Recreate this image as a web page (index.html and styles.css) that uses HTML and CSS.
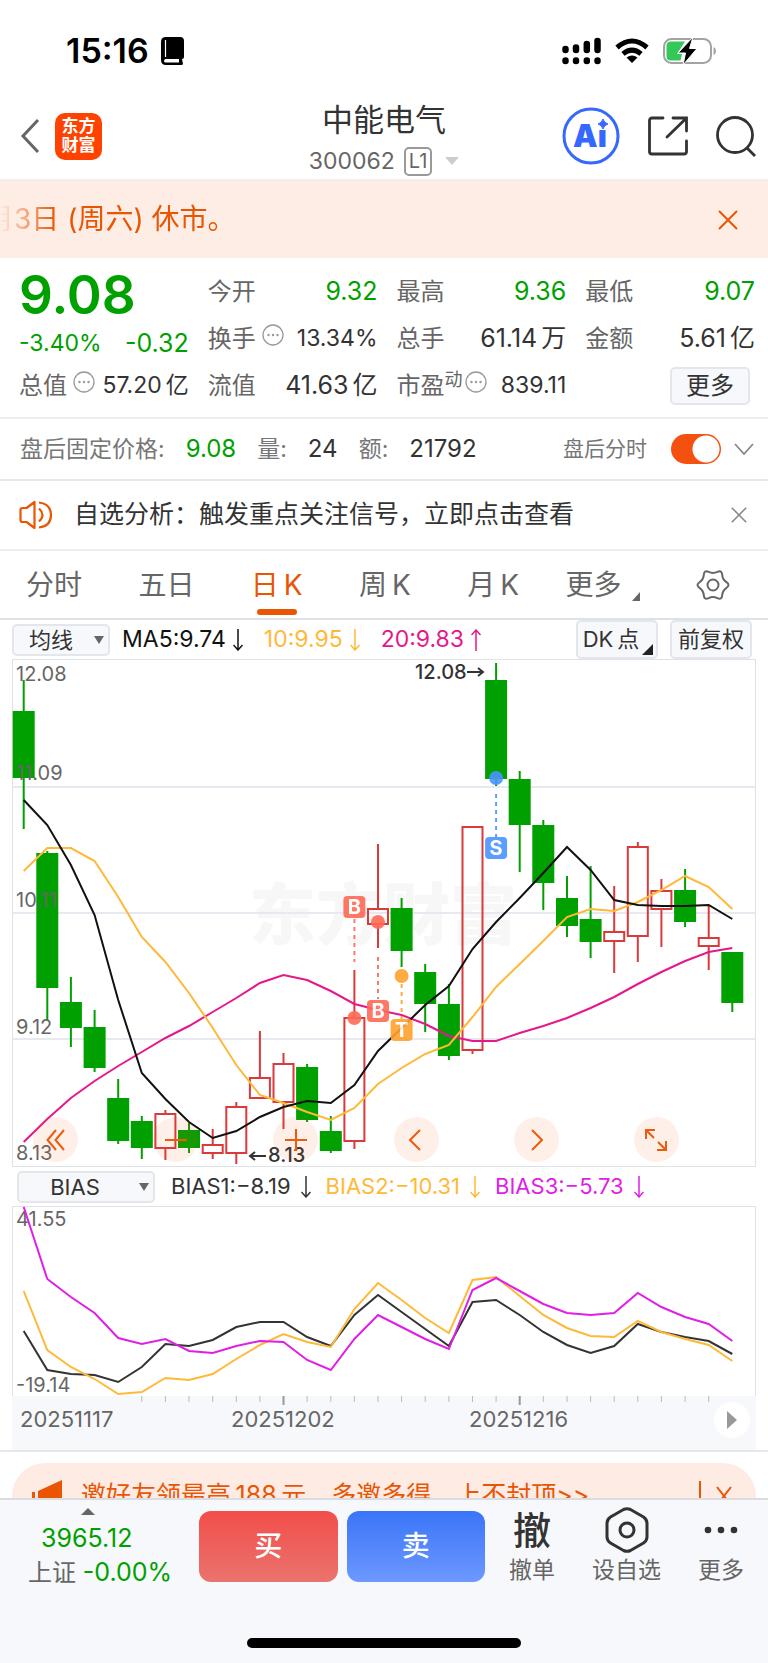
FILE: index.html
```html
<!DOCTYPE html>
<html lang="zh-CN">
<head>
  <meta charset="UTF-8">
  <meta name="viewport" content="width=device-width, initial-scale=1.0">
  <title>中能电气 300062</title>
  <link rel="stylesheet" href="styles.css">
</head>
<body>
  <svg class="defs" width="0" height="0">
    <symbol id="down" viewBox="0 0 10 22"><path d="M5 0V21M0.5 16L5 21L9.5 16" fill="none" stroke="currentColor" stroke-width="1.5"/></symbol>
    <symbol id="up" viewBox="0 0 10 22"><path d="M5 22V1M0.5 6L5 1L9.5 6" fill="none" stroke="currentColor" stroke-width="1.5"/></symbol>
    <symbol id="close" viewBox="0 0 20 20"><path d="M1 1L19 19M19 1L1 19" fill="none" stroke="currentColor" stroke-width="2"/></symbol>
    <symbol id="more" viewBox="0 0 22 22"><circle cx="11" cy="11" r="10" fill="none" stroke="#999" stroke-width="1.3"/><circle cx="6.500" cy="11" r="1.200" fill="#999"/><circle cx="11" cy="11" r="1.200" fill="#999"/><circle cx="15.500" cy="11" r="1.200" fill="#999"/></symbol>
  </svg>

  <main>
    <div class="statusBar">
      <div class="time">
        <span>15:16</span>
        <svg width="24" height="28" viewBox="0 0 24 28">
          <path d="M5 0H19Q23 0 23 4V20Q23 22 21 22L22 27Q22 28 20 28H5Q0 28 0 23V5Q0 0 5 0Z" fill="#000"/>
          <path d="M4.500 3V20" stroke="#fff" stroke-width="1.200"/>
          <path d="M3 24Q3 22 5 22H18V25.500H5Q3 25.500 3 24Z" fill="#fff"/>
        </svg>
      </div>
      <div class="signals">
        <svg width="39" height="28" viewBox="0 0 39 28" fill="none" stroke="#000" stroke-width="6.500" stroke-linecap="round">
          <path d="M3.500 12V13M14 10.500V13M24.800 7V13M35.500 4V13M3.500 23.500V24M14 23.500V24M24.800 23.500V24M35.500 23.500V24"/>
        </svg>
        <svg width="34" height="26" viewBox="0 0 34 26" fill="none" stroke="#000" stroke-width="5">
          <path d="M2 9.500Q17 -3.500 32 9.500"/>
          <path d="M8 15.800Q17 8.300 26 15.800"/>
          <path d="M11.500 19.500Q17 15.500 22.500 19.500L17 25Z" fill="#000" stroke="none"/>
        </svg>
        <svg width="54" height="28" viewBox="0 0 54 28">
          <rect x="1" y="2" width="47" height="24" rx="7.500" fill="#fff" stroke="#a3a3a3" stroke-width="2"/>
          <path d="M50.500 10Q53 11 53 14T50.500 18Z" fill="#a3a3a3"/>
          <path d="M8 4.500H22L14 17H19L17.500 23.500H8Q3.500 23.500 3.500 19V9Q3.500 4.500 8 4.500Z" fill="#34c759"/>
          <path d="M30 0L15 16H22.500L20 28L34 11.500H26.500Z" fill="#000" stroke="#fff" stroke-width="1"/>
        </svg>
      </div>
    </div>

    <header class="header">
      <div class="headLeft">
        <button type="button" class="iconBtn" aria-label="返回">
          <svg width="20" height="36" viewBox="0 0 20 36"><path d="M18 2L3 18L18 34" fill="none" stroke="#666" stroke-width="3"/></svg>
        </button>
        <a href="#" class="logo">东方<br>财富</a>
      </div>
      <div class="headTitle">
        <h1>中能电气</h1>
        <p>300062 <span class="level">L1</span><i class="caret"></i></p>
      </div>
      <div class="headRight">
        <button type="button" class="iconBtn" aria-label="Ai">
          <svg width="58" height="58" viewBox="0 0 58 58">
            <circle cx="29" cy="29" r="27" fill="#fff" stroke="#3568ff" stroke-width="3"/>
            <text x="11" y="40" class="aiText">Aı</text>
            <path d="M41 12Q42 16 46 17Q42 18 41 22Q40 18 36 17Q40 16 41 12Z" fill="#3568ff" stroke="#3568ff"/>
          </svg>
        </button>
        <button type="button" class="iconBtn" aria-label="分享">
          <svg width="40" height="40" viewBox="0 0 40 40" fill="none" stroke="#333" stroke-width="2.800" stroke-linecap="round">
            <path d="M15 2H4Q1.500 2 1.500 4.500V35.500Q1.500 38 4 38H36Q38.500 38 38.500 35.500V25M25 2H38.500V15M38 2.500L19 21"/>
          </svg>
        </button>
        <button type="button" class="iconBtn" aria-label="搜索">
          <svg width="40" height="42" viewBox="0 0 40 42" fill="none" stroke="#333" stroke-width="2.800">
            <circle cx="19" cy="20" r="17.500"/><path d="M31 33L39 41"/>
          </svg>
        </button>
      </div>
    </header>

    <div class="banner">
      <p>月3日 (周六) 休市。</p>
      <button type="button" class="iconBtn" aria-label="关闭公告"><svg width="20" height="20"><use href="#close"/></svg></button>
    </div>

    <section class="quote">
      <div class="price green">9.08</div>
      <div class="cell"><span>今开</span><b class="green">9.32</b></div>
      <div class="cell"><span>最高</span><b class="green">9.36</b></div>
      <div class="cell"><span>最低</span><b class="green">9.07</b></div>
      <div class="cell change green"><b class="small">-3.40%</b><b>-0.32</b></div>
      <div class="cell"><span>换手<svg width="22" height="22"><use href="#more"/></svg></span><b class="small">13.34%</b></div>
      <div class="cell"><span>总手</span><b>61.14<em>万</em></b></div>
      <div class="cell"><span>金额</span><b>5.61<em>亿</em></b></div>
      <div class="cell"><span>总值<svg width="22" height="22"><use href="#more"/></svg></span><b class="small">57.20<em>亿</em></b></div>
      <div class="cell"><span>流值</span><b>41.63<em>亿</em></b></div>
      <div class="cell"><span>市盈<sup>动</sup><svg width="22" height="22"><use href="#more"/></svg></span><b class="small">839.11</b></div>
      <div class="cell last"><button type="button" class="moreBtn">更多</button></div>
    </section>

    <section class="afterHours">
      <p><span>盘后固定价格:</span><b class="green">9.08</b><span>量:</span><b>24</b><span>额:</span><b>21792</b></p>
      <label class="toggle">盘后分时<input type="checkbox" checked></label>
      <button type="button" class="iconBtn" aria-label="展开"><svg width="20" height="12" viewBox="0 0 20 12"><path d="M1 1L10 11L19 1" fill="none" stroke="#888" stroke-width="1.800"/></svg></button>
    </section>

    <section class="notice">
      <svg width="34" height="30" viewBox="0 0 34 30" fill="none" stroke="#ea5504" stroke-width="2.200">
        <path d="M15.500 2V28L7.500 22H3.500Q1.500 22 1.500 20V10Q1.500 8 3.500 8H7.500Z" stroke-linejoin="round"/>
        <path d="M20 8.500Q27 15 20 21.500M20 2.500Q32 4 32 15T20 27.500"/>
      </svg>
      <a href="#">自选分析：触发重点关注信号，立即点击查看</a>
      <button type="button" class="iconBtn gray" aria-label="关闭提示"><svg width="16" height="16"><use href="#close"/></svg></button>
    </section>

    <nav class="tabs">
      <a href="#">分时</a>
      <a href="#">五日</a>
      <a href="#" class="active">日&thinsp;K</a>
      <a href="#">周&thinsp;K</a>
      <a href="#">月&thinsp;K</a>
      <a href="#" class="corner">更多</a>
      <button type="button" class="iconBtn" aria-label="设置">
        <svg width="34" height="32" viewBox="0 0 34 32" fill="none" stroke="#666" stroke-width="2">
          <path d="M30.500 18.800Q26.500 21.500 26.200 26.400Q25.800 31.200 21.400 29.100Q17 27 12.600 29.100Q8.200 31.200 7.800 26.400Q7.500 21.500 3.500 18.800Q-0.500 16 3.500 13.200Q7.500 10.500 7.800 5.600Q8.200 0.800 12.600 2.900Q17 5 21.400 2.900Q25.800 0.800 26.200 5.600Q26.500 10.500 30.500 13.200Q34.500 16 30.500 18.800Z"/>
          <circle cx="17" cy="16" r="5.500"/>
        </svg>
      </button>
    </nav>

    <section class="chartBox">
      <div class="legend maLegend">
        <label class="pick"><select aria-label="主图指标"><option>均线</option></select></label>
        <span class="ma5">MA5:9.74<svg width="10" height="22"><use href="#down"/></svg></span>
        <span class="ma10">10:9.95<svg width="10" height="22"><use href="#down"/></svg></span>
        <span class="ma20">20:9.83<svg width="10" height="22"><use href="#up"/></svg></span>
        <button type="button" class="toolBtn dk">DK&thinsp;点</button>
        <button type="button" class="toolBtn">前复权</button>
      </div>

      <div class="kWrap">
        <svg id="kChart" class="chart" viewBox="0 0 744 508"></svg>
        <div class="chartTools">
          <button type="button" aria-label="最左"><svg width="20" height="22" viewBox="0 0 20 22"><path d="M10 1L1.500 11L10 21M18 1L9.500 11L18 21"/></svg></button>
          <button type="button" aria-label="缩小"><svg width="22" height="22" viewBox="0 0 22 22"><path d="M0 11H22"/></svg></button>
          <button type="button" aria-label="放大"><svg width="22" height="22" viewBox="0 0 22 22"><path d="M0 11H22M11 0V22"/></svg></button>
          <button type="button" aria-label="左移"><svg width="22" height="22" viewBox="0 0 22 22"><path d="M15 1L5 11L15 21"/></svg></button>
          <button type="button" aria-label="右移"><svg width="22" height="22" viewBox="0 0 22 22"><path d="M7 1L17 11L7 21"/></svg></button>
          <button type="button" aria-label="全屏"><svg width="22" height="22" viewBox="0 0 22 22"><path d="M1 10V1H10M1 1L9 9M21 12V21H12M21 21L13 13"/></svg></button>
        </div>
      </div>

      <div class="legend biasLegend">
        <label class="pick wide"><select aria-label="副图指标"><option>BIAS</option></select></label>
        <span class="b1">BIAS1:−8.19<svg width="10" height="22"><use href="#down"/></svg></span>
        <span class="b2">BIAS2:−10.31<svg width="10" height="22"><use href="#down"/></svg></span>
        <span class="b3">BIAS3:−5.73<svg width="10" height="22"><use href="#down"/></svg></span>
      </div>

      <svg id="biasChart" class="chart" viewBox="0 0 744 190"></svg>
      <div class="axis">
        <svg id="axisChart" class="chart" viewBox="0 0 744 54"></svg>
        <button type="button" class="play" aria-label="播放"><svg width="12" height="18" viewBox="0 0 12 18"><path d="M1 0L11 9L1 18Z" fill="#999"/></svg></button>
      </div>
    </section>

    <section class="promo">
      <svg width="34" height="32" viewBox="0 0 34 32" fill="#ea5504"><path d="M1 12H4V26H1ZM7 11L31 0V32L7 26Z"/></svg>
      <a href="#">邀好友领最高&thinsp;188&thinsp;元，多邀多得，上不封顶&gt;&gt;</a>
      <i></i>
      <button type="button" class="iconBtn" aria-label="关闭活动"><svg width="16" height="20" viewBox="0 0 16 20"><path d="M1 1L15 19M15 1L1 19" fill="none" stroke="#ea5504" stroke-width="2"/></svg></button>
    </section>
  </main>

  <footer class="bottomBar">
    <div class="actions">
      <a href="#" class="index">
        <i></i>
        <b>3965.12</b>
        <span>上证 <b>-0.00%</b></span>
      </a>
      <button type="button" class="trade buy">买</button>
      <button type="button" class="trade sell">卖</button>
      <a href="#" class="act cancel"><strong>撤</strong>撤单</a>
      <a href="#" class="act watch">
        <svg width="44" height="46" viewBox="0 0 44 46" fill="none" stroke="#333" stroke-width="3">
          <path d="M18.500 2.500Q22 1 25.500 2.500L38.500 10Q42 12.500 42 16V30Q42 33.500 38.500 36L25.500 43.500Q22 45 18.500 43.500L5.500 36Q2 33.500 2 30V16Q2 12.500 5.500 10Z"/>
          <circle cx="22" cy="23" r="7"/>
        </svg>
        设自选
      </a>
      <a href="#" class="act">
        <svg width="34" height="46" viewBox="0 0 34 46" fill="#333"><circle cx="4" cy="23" r="3.300"/><circle cx="17" cy="23" r="3.300"/><circle cx="30" cy="23" r="3.300"/></svg>
        更多
      </a>
    </div>
    <div class="homeBar"></div>
  </footer>
  <script src="chart.js"></script>
</body>
</html>
```
FILE: styles.css
```css
* {
  box-sizing: border-box;
}
body {
  margin: 0;
  height: 100vh;
  display: flex;
  flex-direction: column;
  background: #fff;
  color: #333;
  font-family: Inter, "Noto Sans CJK SC", sans-serif;
  font-size: 24px;
  line-height: 1.25;
}
main {
  flex: 1;
  min-height: 0;
  overflow: hidden;
}
h1, p {
  margin: 0;
  font-weight: 400;
}
b, em, i {
  font-weight: 400;
  font-style: normal;
}
a {
  color: inherit;
  text-decoration: none;
}
button, select, input {
  font: inherit;
  color: inherit;
  margin: 0;
}
svg {
  display: block;
  flex: none;
}
.defs {
  position: absolute;
}
.iconBtn {
  border: 0;
  padding: 0;
  background: none;
}
.gray {
  color: #888;
}
.green {
  color: #00a000;
}

/* status bar */
.statusBar {
  height: 92px;
  padding: 10px 51px 0 66px;
  display: flex;
  align-items: center;
  justify-content: space-between;
}
.time {
  display: flex;
  align-items: center;
  gap: 12px;
  color: #000;
  font-size: 34px;
  font-weight: 600;
}
.signals {
  display: flex;
  align-items: center;
  gap: 14px;
}

/* header */
.header {
  height: 89px;
  padding: 0 12px;
  display: grid;
  grid-template-columns: 1fr auto 1fr;
  align-items: center;
  border-bottom: 2px solid #eee;
}
.headLeft {
  padding-left: 8px;
  display: flex;
  align-items: center;
  gap: 15px;
}
.logo {
  width: 47px;
  height: 47px;
  padding-top: 4px;
  border-radius: 10px;
  background: #ff4200;
  color: #fff;
  font-size: 17px;
  font-weight: 700;
  line-height: 19px;
  text-align: center;
}
.headTitle {
  padding-top: 6px;
  text-align: center;
}
.headTitle h1 {
  font-size: 31px;
  line-height: 44px;
}
.headTitle p {
  display: flex;
  align-items: center;
  justify-content: center;
  gap: 9px;
  font-size: 23px;
  line-height: 38px;
  color: #666;
}
.level {
  padding: 0 3px;
  border: 2px solid #999;
  border-radius: 5px;
  font-size: 20px;
  line-height: 25px;
}
.caret {
  margin-left: 4px;
  border: 7px solid transparent;
  border-top: 8px solid #ccc;
  border-bottom: 0;
}
.headRight {
  display: flex;
  align-items: center;
  justify-content: flex-end;
  gap: 28px;
}
.aiText {
  fill: #3568ff;
  font-size: 31px;
  font-weight: 900;
}

/* banner */
.banner {
  height: 77px;
  padding-right: 30px;
  display: flex;
  align-items: center;
  justify-content: space-between;
  background: #feede5;
  color: #ea5504;
  font-size: 28px;
  overflow: hidden;
}
.banner p {
  text-indent: -14px;
  -webkit-mask-image: linear-gradient(90deg, transparent, #000 56px);
  mask-image: linear-gradient(90deg, transparent, #000 56px);
}

/* quote */
.quote {
  padding: 10px 13px 8px 19px;
  display: grid;
  grid-template-columns: repeat(4, 1fr);
  grid-auto-rows: 47px;
  column-gap: 19px;
  border-bottom: 2px solid #eee;
}
.price {
  font-size: 53px;
  font-weight: 600;
  line-height: 54px;
}
.cell {
  display: flex;
  align-items: center;
  justify-content: space-between;
  white-space: nowrap;
}
.cell > span {
  display: flex;
  color: #666;
}
.cell > span svg {
  margin-left: 6px;
}
.cell sup {
  font-size: 18px;
  line-height: 18px;
}
.cell sup + svg {
  margin-left: 2px;
}
.cell b {
  font-size: 25px;
}
.cell .small {
  font-size: 23px;
}
.cell em {
  margin-left: 4px;
}
.change {
  padding-top: 10px;
}
.last {
  justify-content: flex-end;
  padding-right: 5px;
}
.moreBtn {
  width: 80px;
  height: 38px;
  padding: 0;
  border: 2px solid #e3e6ea;
  border-radius: 5px;
  background: #f7f8fb;
}

/* after hours */
.afterHours {
  height: 62px;
  padding: 0 14px 0 20px;
  display: flex;
  align-items: center;
  border-bottom: 2px solid #e6e8ec;
  font-size: 23px;
}
.afterHours p {
  flex: 1;
  display: flex;
  align-items: center;
  gap: 21px;
}
.afterHours b {
  font-size: 24px;
}
.afterHours p span, .toggle {
  color: #777;
}
.toggle {
  display: flex;
  align-items: center;
  gap: 24px;
  margin-right: 13px;
  font-size: 21px;
}
.toggle input {
  appearance: none;
  width: 50px;
  height: 30px;
  border-radius: 15px;
  background: radial-gradient(circle at 35px 15px, #fff 13px, #f4500f 14px);
}

/* notice */
.notice {
  height: 70px;
  padding: 0 21px 0 19px;
  display: flex;
  align-items: center;
  border-bottom: 2px solid #eee;
  font-size: 25px;
}
.notice a {
  flex: 1;
  margin-left: 21px;
}

/* tabs */
.tabs {
  height: 69px;
  padding: 0 38px 0 26px;
  display: flex;
  align-items: center;
  justify-content: space-between;
  border-bottom: 2px solid #dfe1e8;
  color: #666;
  font-size: 28px;
}
.tabs a {
  position: relative;
  line-height: 66px;
}
.tabs .active {
  color: #ea5504;
}
.tabs .active::after {
  content: "";
  position: absolute;
  left: 50%;
  bottom: 3px;
  width: 40px;
  height: 6px;
  margin-left: -20px;
  border-radius: 3px;
  background: #ea5504;
}
.tabs .corner {
  margin-left: -10px;
  padding-right: 18px;
}
.corner::after {
  content: "";
  position: absolute;
  right: 0;
  bottom: 17px;
  border-left: 8px solid transparent;
  border-bottom: 9px solid #666;
}

/* charts */
.chartBox {
  padding: 0 12px;
  border-bottom: 2px solid #e6e7ec;
}
.chart {
  width: 100%;
  height: auto;
}
.legend {
  display: flex;
  align-items: center;
  height: 39px;
  font-size: 22px;
  white-space: nowrap;
}
.legend span {
  display: flex;
  align-items: center;
  gap: 10px;
}
.maLegend span {
  margin-right: 21px;
  gap: 7px;
  font-size: 23px;
}
.biasLegend span {
  margin-right: 15px;
}
.pick {
  position: relative;
  margin-right: 12px;
}
.pick select {
  display: block;
  appearance: none;
  width: 98px;
  height: 32px;
  padding: 0 20px 0 0;
  border: 2px solid #e3e6ea;
  border-radius: 5px;
  background: #f7f8fb;
  line-height: 28px;
  text-align-last: center;
}
.pick::after {
  content: "";
  position: absolute;
  right: 6px;
  top: 12px;
  border: 5px solid transparent;
  border-top: 8px solid #666;
  border-bottom: 0;
}
.pick.wide {
  margin: 0 16px 0 5px;
}
.wide select {
  width: 138px;
  padding-right: 22px;
}
.toolBtn {
  width: 82px;
  height: 39px;
  margin-right: 12px;
  padding: 0;
  border: 2px solid #e3e6ea;
  border-radius: 5px;
  background: #f7f8fb;
}
.toolBtn:last-child {
  margin-right: 4px;
}
.dk {
  position: relative;
  margin-left: auto;
  padding-right: 12px;
}
.dk::after {
  content: "";
  position: absolute;
  right: 3px;
  bottom: 2px;
  border-left: 11px solid transparent;
  border-bottom: 11px solid #222;
}
.ma5 {
  color: #111;
}
.ma10, .b2 {
  color: #ffb938;
}
.ma20 {
  color: #e6178b;
}
.b3 {
  color: #e01ee6;
}
.kWrap, .axis {
  position: relative;
}
.chartTools {
  position: absolute;
  left: 21px;
  right: 77px;
  bottom: 5px;
  display: flex;
  justify-content: space-between;
}
.chartTools button {
  width: 45px;
  height: 45px;
  padding: 0;
  border: 0;
  border-radius: 50%;
  background: rgba(240, 90, 10, 0.09);
  display: flex;
  align-items: center;
  justify-content: center;
}
.chartTools path {
  fill: none;
  stroke: #f05a0a;
  stroke-width: 2;
}
.frame {
  fill: none;
  stroke: #dfe2e6;
  stroke-width: 1;
}
.grid {
  stroke: #e6e9ef;
  stroke-width: 2;
}
.watermark {
  fill: #f7f7f7;
  font-size: 67px;
  font-weight: 900;
}
.line {
  fill: none;
  stroke-width: 2;
}
.scale {
  fill: #666;
  font-size: 20px;
}
.peak {
  fill: #333;
  font-size: 20px;
  font-weight: 500;
}
.peakArrow {
  fill: none;
  stroke: #333;
  stroke-width: 2;
}
.badge {
  fill: #fff;
  font-size: 20px;
  font-weight: 700;
  text-anchor: middle;
}
.date {
  fill: #666;
  font-size: 22px;
}
.axis {
  background: #f7f8fb;
}
.play {
  position: absolute;
  right: 6px;
  top: 6px;
  width: 36px;
  height: 36px;
  padding: 0;
  border: 0;
  border-radius: 50%;
  background: #fff;
  display: flex;
  align-items: center;
  justify-content: center;
}

/* promo */
.promo {
  height: 66px;
  margin: 11px 12px 0;
  padding: 0 24px 0 19px;
  border-radius: 33px;
  display: flex;
  align-items: center;
  background: #feece4;
  color: #ea5504;
  font-size: 25px;
}
.promo > svg {
  margin-right: 16px;
}
.promo a {
  flex: 1;
}
.promo i {
  width: 2px;
  height: 30px;
  margin-right: 15px;
  background: #ea5504;
}

/* bottom bar */
.bottomBar {
  height: 165px;
  border-top: 2px solid #dadce3;
  background: #f7f8fb;
}
.actions {
  display: flex;
  align-items: flex-start;
  padding: 7px 24px 0 28px;
}
.index {
  width: 146px;
  margin-right: 25px;
  color: #666;
  line-height: 34px;
  white-space: nowrap;
}
.index i {
  display: block;
  width: 14px;
  margin: 1px 0 6px 53px;
  border: 7px solid transparent;
  border-top: 0;
  border-bottom: 7px solid #666;
}
.index b {
  color: #00a000;
  font-size: 25px;
}
.index > b {
  display: block;
  margin-left: 13px;
}
.trade {
  flex: 1;
  height: 71px;
  margin: 4px 9px 0 0;
  padding: 0;
  border: 0;
  border-radius: 12px;
  color: #fff;
  font-size: 28px;
  font-weight: 500;
}
.buy {
  background: linear-gradient(#f24e4a, #ea736e);
}
.sell {
  background: linear-gradient(#3a75f8, #6d98ff);
}
.act {
  display: flex;
  flex-direction: column;
  align-items: center;
  color: #666;
  font-size: 23px;
  line-height: 34px;
}
.act strong {
  color: #333;
  font-size: 38px;
  font-weight: 500;
  line-height: 46px;
}
.cancel {
  margin-left: 15px;
}
.watch {
  margin: 0 37px;
}
.homeBar {
  width: 274px;
  height: 10px;
  margin: 48px auto 0;
  border-radius: 5px;
  background: #000;
}
```
FILE: chart.js
```js
const STEP = 23.62;
const FIRST = 11.7;
const GREEN = "#00a000";
const RED = "#d93a3a";

// high, top, bottom, low, rising
const candles = [
  [21, 52, 119, 170, 0], [192, 194, 329, 361, 0], [318, 343, 369, 388, 0], [351, 368, 409, 413, 0],
  [420, 439, 482, 485, 0], [457, 462, 489, 500, 0], [451, 455, 489, 501, 1], [464, 471, 489, 494, 0],
  [470, 486, 494, 500, 1], [443, 448, 494, 505, 1], [372, 419, 439, 440, 1], [394, 405, 443, 470, 1],
  [405, 408, 461, 463, 0], [457, 472, 492, 494, 0], [311, 359, 482, 490, 1], [185, 250, 265, 289, 1],
  [239, 249, 292, 308, 0], [305, 313, 345, 373, 0], [325, 345, 397, 401, 0], [168, 168, 391, 395, 1],
  [4, 21, 120, 127, 0], [112, 120, 166, 213, 0], [161, 166, 224, 251, 0], [217, 239, 267, 278, 0],
  [207, 260, 283, 299, 0], [227, 273, 282, 314, 1], [183, 188, 277, 303, 1], [220, 232, 250, 288, 1],
  [210, 231, 263, 268, 0], [247, 279, 287, 311, 1], [293, 293, 344, 353, 0]
];
const ma5 = [141, 166, 206, 256, 341, 414, 440, 463, 479, 472, 458, 448, 442, 444, 426, 392, 369, 346, 327, 290, 263, 239, 214, 188, 211, 241, 246, 247, 247, 246, 260];
const ma10 = [212, 189, 189, 202, 238, 278, 303, 334, 369, 406, 436, 444, 453, 461, 449, 425, 409, 395, 386, 358, 328, 305, 282, 258, 250, 252, 243, 231, 217, 228, 250];
const ma20 = [483, 460, 439, 422, 407, 393, 379, 367, 353, 339, 324, 316, 321, 332, 345, 351, 356, 365, 377, 382, 382, 374, 367, 359, 349, 338, 325, 313, 302, 293, 289];

const bias1 = [125, 164, 168, 169, 176, 161, 138, 140, 134, 121, 116, 116, 131, 140, 109, 89, 106, 123, 140, 96, 94, 109, 126, 139, 147, 140, 118, 126, 131, 135, 148];
const bias2 = [85, 144, 161, 173, 188, 186, 172, 174, 168, 153, 139, 128, 136, 141, 103, 77, 94, 112, 127, 74, 71, 90, 109, 122, 130, 131, 115, 126, 133, 139, 155];
const bias3 = [1, 73, 91, 107, 132, 138, 133, 145, 147, 140, 135, 136, 154, 164, 133, 109, 121, 133, 143, 84, 72, 85, 98, 107, 109, 107, 87, 101, 111, 118, 135];

// index, letter, badge top, dot, dash start, dash end, color
const marks = [
  [14, "B", 237, 359, 260, 303, "#ff6a55"],
  [15, "B", 341, 263, 298, 340, "#ff6a55"],
  [16, "T", 360, 317, 317, 360, "#ffa22e"],
  [20, "S", 178, 119, 135, 178, "#4a94ff"]
];

function x(i) {
  return (FIRST + i * STEP).toFixed(1);
}

function line(data, color) {
  const points = data.map((y, i) => x(i) + "," + y).join(" ");
  return `<polyline class="line" points="${points}" stroke="${color}"/>`;
}

function label(cls, left, y, text) {
  return `<text class="${cls}" x="${left}" y="${y}">${text}</text>`;
}

function drawK() {
  let str = label("watermark", 237, 280, "东方财富");
  [128, 254, 380].forEach(y => {
    str += `<path class="grid" d="M0 ${y}H744"/>`;
  });
  str += '<rect class="frame" x="0.5" y="0.5" width="743" height="507"/>';

  candles.forEach(([high, top, bottom, low, rising], i) => {
    const color = rising ? RED : GREEN;
    str += `<path d="M${x(i)} ${high}V${top}M${x(i)} ${bottom}V${low}" stroke="${color}" stroke-width="2"/>`;
    if (rising) {
      str += `<rect x="${x(i) - 10}" y="${top}" width="20" height="${bottom - top}" fill="none" stroke="${color}" stroke-width="2"/>`;
    } else {
      str += `<rect x="${x(i) - 11}" y="${top}" width="22" height="${bottom - top}" fill="${color}"/>`;
    }
  });

  str += line(ma20, "#e6178b") + line(ma10, "#ffb938") + line(ma5, "#111");

  marks.forEach(([i, letter, top, dot, from, to, color]) => {
    str += `<g opacity="0.9"><path d="M${x(i)} ${from}V${to}" stroke="${color}" stroke-width="2" stroke-dasharray="4 4"/>`;
    str += `<circle cx="${x(i)}" cy="${dot}" r="7" fill="${color}"/>`;
    str += `<rect x="${x(i) - 11}" y="${top}" width="22" height="22" rx="4" fill="${color}"/>`;
    str += label("badge", x(i), top + 18, letter) + "</g>";
  });

  str += label("scale", 4, 22, "12.08") + label("scale", 4, 121, "11.09") + label("scale", 4, 248, "10.11");
  str += label("scale", 4, 375, "9.12") + label("scale", 4, 501, "8.13");
  str += label("peak", 403, 20, "12.08") + '<path class="peakArrow" d="M455 13H471M466 9L471 13L466 17"/>';
  str += label("peak", 256, 503, "8.13") + '<path class="peakArrow" d="M254 497H238M243 493L238 497L243 501"/>';
  document.getElementById("kChart").innerHTML = str;
}

function drawBias() {
  let str = '<path class="frame" d="M0.5 190V0.5H743.5V190"/>';
  str += label("scale", 4, 20, "41.55") + label("scale", 4, 186, "-19.14");
  str += line(bias1, "#333") + line(bias2, "#ffb938") + line(bias3, "#e01ee6");
  document.getElementById("biasChart").innerHTML = str;
}

function drawAxis() {
  let str = "";
  for (let i = 5; i < 30; i++) {
    const big = i == 11 || i == 21;
    str += `<path d="M${x(i)} 0V${big ? 9 : 6}" stroke="${big ? "#999" : "#bbb"}" stroke-width="${big ? 2 : 1}"/>`;
  }
  str += label("date", 8, 31, "20251117") + label("date", 219, 31, "20251202") + label("date", 457, 31, "20251216");
  document.getElementById("axisChart").innerHTML = str;
}

drawK();
drawBias();
drawAxis();
```
